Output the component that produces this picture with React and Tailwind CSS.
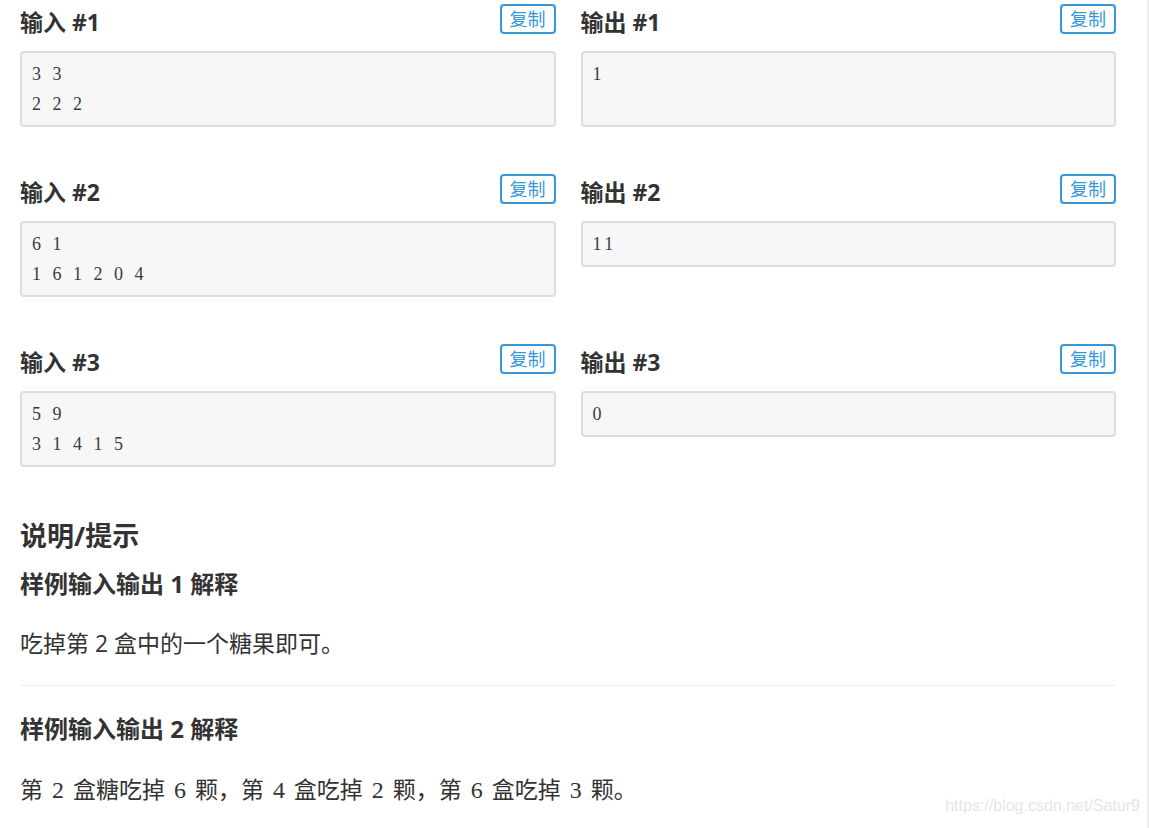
const samples = [
  { id: 1, input: ['3 3', '2 2 2'], output: ['1', ''] },
  { id: 2, input: ['6 1', '1 6 1 2 0 4'], output: ['11'] },
  { id: 3, input: ['5 9', '3 1 4 1 5'], output: ['0'] },
]

const sans = { fontFamily: '"Open Sans", "Noto Sans CJK SC", sans-serif' }

function CopyButton() {
  return (
    <button className="mt-[4px] h-[30px] w-[56px] border-2 border-[#3498db] rounded-[4px] text-[#3498db] text-[18px] leading-none flex items-center justify-center bg-white">
      复制
    </button>
  )
}

function SampleBlock({ title, lines }) {
  return (
    <div>
      <div className="flex items-start justify-between h-[34px] mb-[17px]">
        <h3 className="mt-[8px] text-[23px] leading-[28px] font-bold text-[#333]">{title}</h3>
        <CopyButton />
      </div>
      <pre className="border-2 border-[#ddd] rounded-[4px] bg-[#f7f7f7] px-[10px] pt-[6px] pb-[6px] text-[18px] leading-[30px] tracking-[3.5px] text-[#3a3a4a] font-['Liberation_Serif',serif]">
        {lines.map((l, i) => (
          <div key={i} className="h-[30px] whitespace-pre">{l}</div>
        ))}
      </pre>
    </div>
  )
}

// formula digits
const K = ({ children }) => (
  <span className="mx-[3px] font-['Liberation_Serif',serif] text-[24px]">{children}</span>
)

export default function App() {
  return (
    <div className="relative w-[1149px] h-[828px] overflow-hidden bg-white" style={sans}>
      <div className="h-full border-r-2 border-[#eee] w-[1149px] pl-[20px] pr-[31px]">
        <div className="grid grid-cols-2 gap-x-[25px] gap-y-[43px] items-start">
          {samples.map(s => (
            <>
              <SampleBlock key={'i' + s.id} title={`输入 #${s.id}`} lines={s.input} />
              <SampleBlock key={'o' + s.id} title={`输出 #${s.id}`} lines={s.output} />
            </>
          ))}
        </div>

        <h2 className="mt-[51px] text-[27px] leading-[36px] font-bold text-[#333]">说明/提示</h2>
        <h3 className="mt-[14px] text-[24px] leading-[32px] font-bold text-[#333]">样例输入输出 1 解释</h3>
        <p className="mt-[26px] text-[23px] leading-[34px] text-[#333]">吃掉第 2 盒中的一个糖果即可。</p>
        <hr className="mt-[25px] border-0 border-t border-[#eee]" />
        <h3 className="mt-[27px] text-[24px] leading-[32px] font-bold text-[#333]">样例输入输出 2 解释</h3>
        <p className="mt-[27px] text-[23px] leading-[34px] text-[#333]">
          第 <K>2</K> 盒糖吃掉 <K>6</K> 颗，第 <K>4</K> 盒吃掉 <K>2</K> 颗，第 <K>6</K> 盒吃掉 <K>3</K> 颗。
        </p>
      </div>

      {/* watermark */}
      <div className="absolute right-[9px] bottom-[10px] text-[16px] text-[#e6e6e6] font-['Liberation_Sans',sans-serif]">
        https://blog.csdn.net/Satur9
      </div>
    </div>
  )
}
